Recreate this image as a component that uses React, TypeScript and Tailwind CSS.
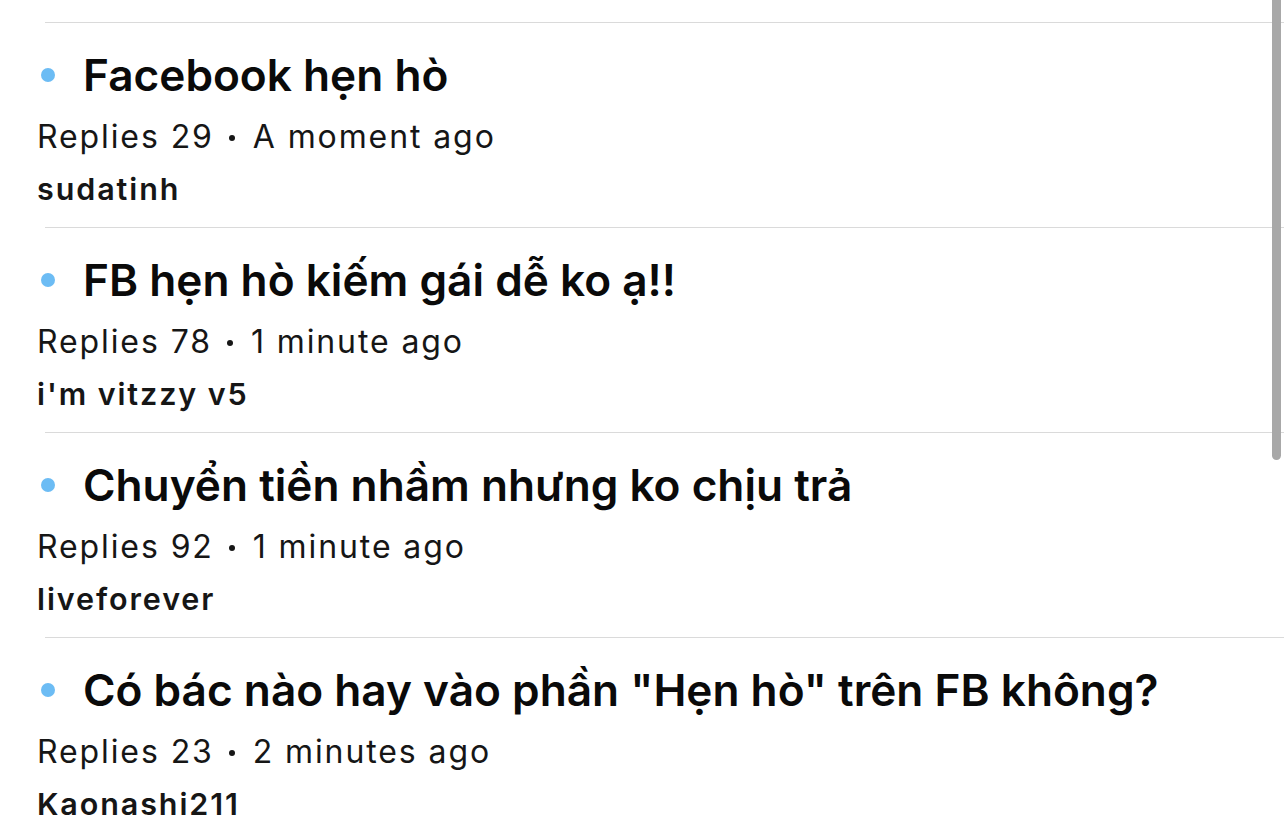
import React from 'react'

type Thread = {
  title: string
  replies: number
  time: string
  author: string
}

const threads: Thread[] = [
  { title: 'Facebook hẹn hò', replies: 29, time: 'A moment ago', author: 'sudatinh' },
  { title: 'FB hẹn hò kiếm gái dễ ko ạ!!', replies: 78, time: '1 minute ago', author: "i'm vitzzy v5" },
  { title: 'Chuyển tiền nhầm nhưng ko chịu trả', replies: 92, time: '1 minute ago', author: 'liveforever' },
  { title: 'Có bác nào hay vào phần "Hẹn hò" trên FB không?', replies: 23, time: '2 minutes ago', author: 'Kaonashi211' },
]

function ThreadRow({ thread }: { thread: Thread }) {
  return (
    <div>
      <div className="h-px bg-[#dadada] ml-[45px]" />
      <div className="pl-[37px] pt-[26px] pb-[21px]">
        <div className="flex items-center h-[52px]">
          <span className="w-[14px] h-[14px] rounded-full bg-[#6cbcf4] ml-[4px] mr-[28px] shrink-0" />
          <h3 className="text-[44.2px] leading-[52px] font-semibold text-[#0a0a0a] whitespace-nowrap">
            {thread.title}
          </h3>
        </div>
        <p className="mt-[16px] text-[32px] leading-[40px] tracking-[1.9px] text-[#161616] whitespace-nowrap">
          Replies {thread.replies}
          <span className="inline-block w-[6px] h-[6px] rounded-full bg-[#161616] align-middle ml-[15px] mr-[18px] relative -top-[1px]" />
          {thread.time}
        </p>
        <p className="mt-[15px] text-[30.5px] leading-[34px] tracking-[1.9px] font-semibold text-[#161616] whitespace-nowrap">
          {thread.author}
        </p>
      </div>
    </div>
  )
}

export default function App() {
  return (
    <div
      className="relative w-[1284px] h-[840px] overflow-hidden bg-white"
      style={{ fontFamily: 'Inter, "Noto Sans", sans-serif' }}
    >
      <div className="pt-[22px]">
        {threads.map((t, i) => (
          <ThreadRow key={i} thread={t} />
        ))}
      </div>
      <div className="absolute right-[3px] top-0 w-[9px] h-[460px] bg-[#a8a8a8] rounded-b-full" />
    </div>
  )
}
